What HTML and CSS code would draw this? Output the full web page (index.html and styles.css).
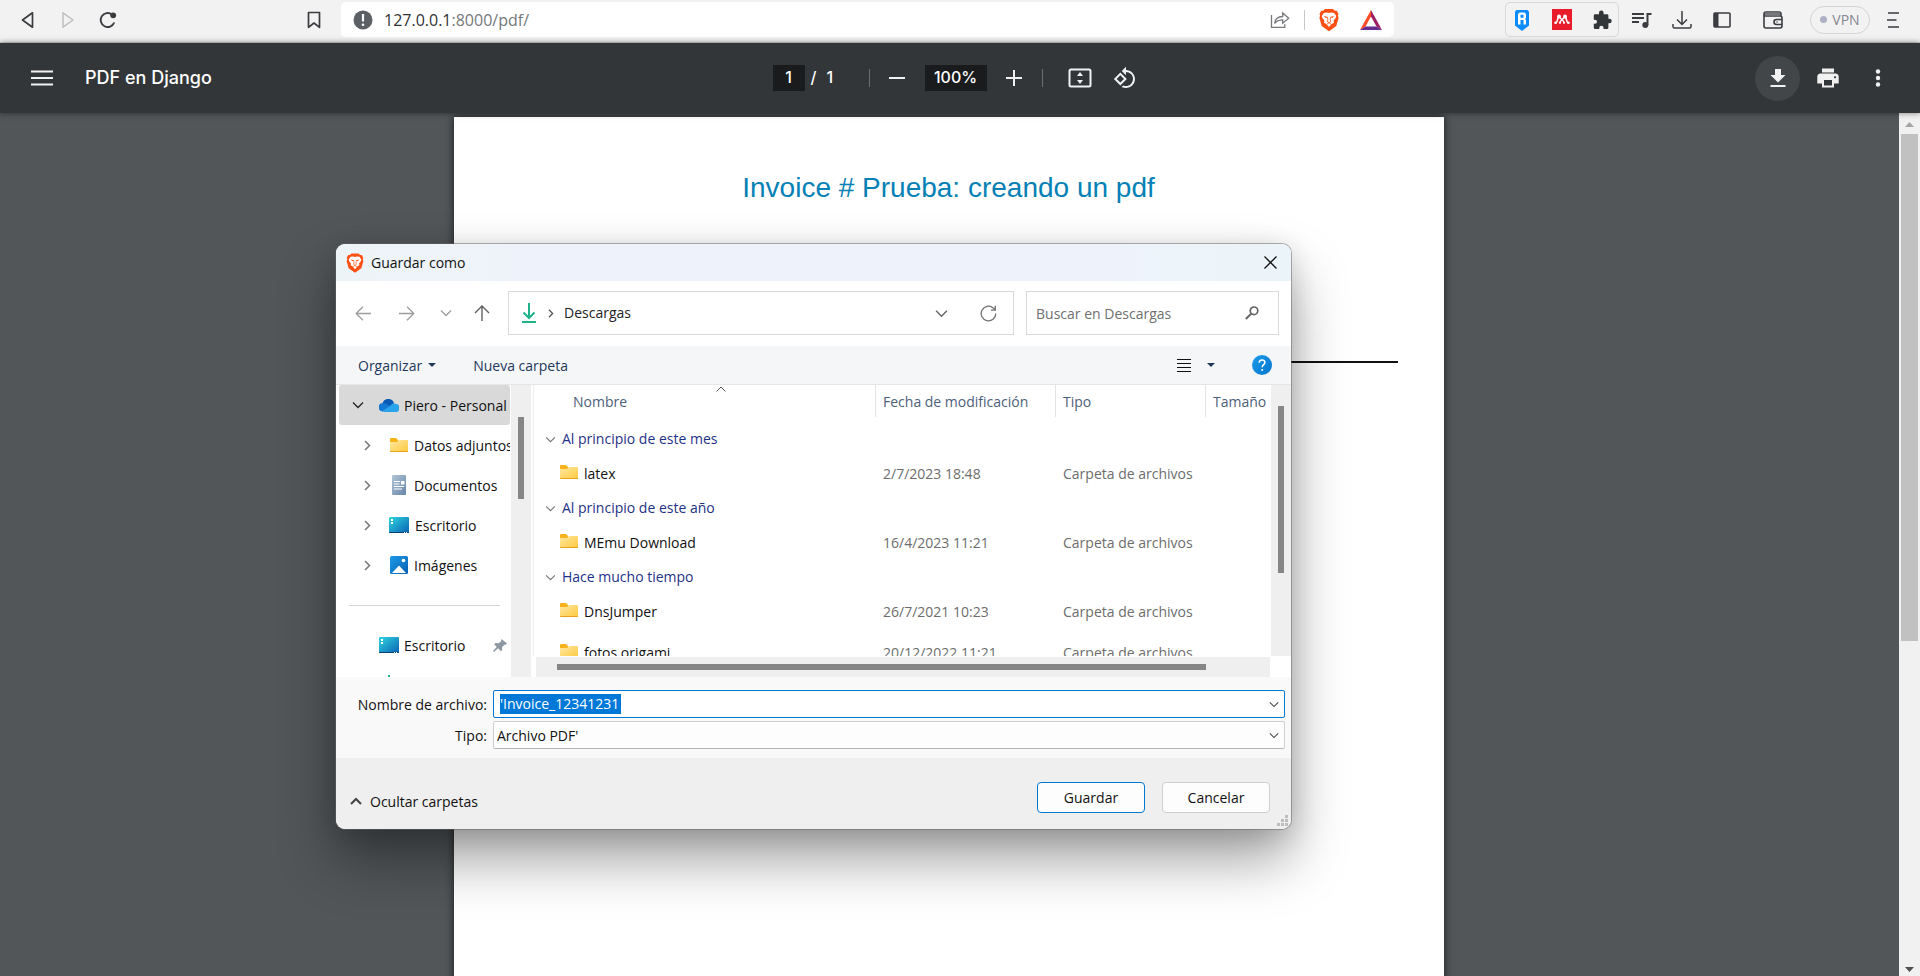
FILE: index.html
```html
<!DOCTYPE html>
<html lang="es">
<head>
<meta charset="utf-8">
<title>PDF en Django</title>
<link rel="stylesheet" href="styles.css">
</head>
<body>
<svg class="defs" aria-hidden="true">
  <defs>
    <linearGradient id="g-folder" x1="0" y1="0" x2="1" y2="1"><stop offset="0" stop-color="#ffe8a0"/><stop offset="1" stop-color="#fdc93f"/></linearGradient>
    <linearGradient id="g-desk" x1="0" y1="0" x2="1" y2="1"><stop offset="0" stop-color="#2fd6e0"/><stop offset="1" stop-color="#0a62b4"/></linearGradient>
    <linearGradient id="g-doc" x1="0" y1="0" x2="1" y2="1"><stop offset="0" stop-color="#b3c5d8"/><stop offset="1" stop-color="#6685a8"/></linearGradient>
    <linearGradient id="g-img" x1="0" y1="0" x2="1" y2="1"><stop offset="0" stop-color="#1c9be6"/><stop offset="1" stop-color="#0a60b5"/></linearGradient>
    <linearGradient id="g-help" x1="0" y1="0" x2="1" y2="1"><stop offset="0" stop-color="#1b9de8"/><stop offset="1" stop-color="#0673cf"/></linearGradient>
    <symbol id="folder" viewBox="0 0 18 14"><path d="M0 1a1 1 0 0 1 1-1h5l2 2v3H0z" fill="#f7b21c"/><path d="M0 4h7l2-2h8a1 1 0 0 1 1 1v10a1 1 0 0 1-1 1H1a1 1 0 0 1-1-1z" fill="url(#g-folder)"/><path d="M0 13h18a1 1 0 0 1-1 1H1a1 1 0 0 1-1-1z" fill="#e8a21c"/></symbol>
    <symbol id="desktop" viewBox="0 0 20 16"><rect width="20" height="16" rx="1" fill="url(#g-desk)"/><path d="M0 15h20a1 1 0 0 1-1 1H1a1 1 0 0 1-1-1z" fill="#0b3f70"/><path d="M2 2h2v2H2zM2 5h2v2H2zM15 15h1v1h-1zM17 15h1v1h-1z" fill="#fff"/></symbol>
    <symbol id="lion" viewBox="0 0 20 23"><path d="M6 .5h8l1.800 1.800 2-.1L19.500 5.500l-.6 1.700.7 2.300-2.300 8L10 22.800 2.700 17.500.4 9.500l.7-2.300L.5 5.500 2.200 2.200l2 .1z" fill="#fb4f14"/><path d="M10 4.600l2.200-.6 3 .4 2 3.200-.5 2L14.600 12l.4 2.200-2.400 1.300L10 18.600l-2.600-3.100L5 14.200l.4-2.200-2.100-2.400-.5-2 2-3.200 3-.4z" fill="#fff"/><path d="M4.800 7.400l3.700.8.2 1.100-2.100-.1zM15.200 7.400l-3.700.8-.2 1.100 2.100-.1z" fill="#fb4f14"/><path d="M8.500 9l.4 2.600-.9 1.200 2 1.400 2-1.400-.9-1.200.4-2.600M7.900 15.700L10 14.300l2.100 1.400" fill="none" stroke="#fb4f14" stroke-width=".8"/></symbol>
    <symbol id="chev-down" viewBox="0 0 12 8"><path d="M1 1.500l5 5 5-5" fill="none" stroke="currentColor" stroke-width="1.300"/></symbol>
    <symbol id="chev-right" viewBox="0 0 7 11"><path d="M1 1l4.500 4.500L1 10" fill="none" stroke="currentColor" stroke-width="1.600"/></symbol>
    <symbol id="caret" viewBox="0 0 8 4"><path d="M0 0h8L4 4z" fill="currentColor"/></symbol>
  </defs>
</svg>

<header class="browser">
  <nav class="browser-nav">
    <button class="tool" aria-label="Atrás"><svg width="16" height="18" viewBox="0 0 16 18"><path d="M12.500 1.800v14.400L2.500 9z" fill="none" stroke="#3a3c40" stroke-width="1.700" stroke-linejoin="round"/></svg></button>
    <button class="tool" aria-label="Adelante"><svg width="16" height="18" viewBox="0 0 16 18"><path d="M3 1.800v14.400L13 9z" fill="none" stroke="#bfbfc1" stroke-width="1.500" stroke-linejoin="round"/></svg></button>
    <button class="tool" aria-label="Recargar"><svg width="18" height="18" viewBox="0 0 18 18"><path d="M15.200 11.500A7 7 0 1 1 13 3.500" fill="none" stroke="#3a3c40" stroke-width="1.900"/><circle cx="14.200" cy="4.300" r="2.900" fill="#3a3c40"/></svg></button>
    <button class="tool tool-mark" aria-label="Marcador"><svg width="14" height="18" viewBox="0 0 14 18"><path d="M1.500 1.500h11v14.800L7 12l-5.500 4.300z" fill="none" stroke="#3a3c40" stroke-width="1.700" stroke-linejoin="round"/></svg></button>
  </nav>
  <div class="address">
    <svg width="20" height="20" viewBox="0 0 20 20"><circle cx="10" cy="10" r="9.500" fill="#5c5f64"/><path d="M10 4v7.500" stroke="#fff" stroke-width="2.200"/><circle cx="10" cy="14.700" r="1.300" fill="#fff"/></svg>
    <a class="url" href="#">127.0.0.1<span>:8000/pdf/</span></a>
    <svg class="push" width="20" height="18" viewBox="0 0 20 18" fill="none" stroke="#77797d" stroke-width="1.300"><path d="M1.500 4v12.300h13.300v-3M4.700 12.500c.5-4.800 3-7 8-7V2l6 5.200-6 5V8.800c-4 0-6 .8-8 3.700z"/></svg>
    <i class="rule"></i>
    <svg class="lion" width="20" height="24"><use href="#lion"/></svg>
    <svg width="22" height="20" viewBox="0 0 22 20"><path d="M11 0L0 20l5.500-3.500L11 6.500z" fill="#ff4c24"/><path d="M11 0v6.500l5.500 10L22 20z" fill="#9e1f63"/><path d="M0 20h22l-5.500-3.500h-11z" fill="#662d91"/></svg>
  </div>
  <div class="browser-tools">
    <div class="extensions">
      <svg width="20" height="22" viewBox="0 0 20 22"><path d="M4.500 1h11L17 2.500v14L10 22l-7-5.500v-14z" fill="#0a8cff"/><path d="M6 15.500V5l1.500-1.500h5L14 5v4l-1 1 1 1v4.500h-2.500V11h-3v4.500zM8.500 5.700v3h3v-3z" fill="#fff" fill-rule="evenodd"/></svg>
      <svg width="20" height="21" viewBox="0 0 20 21"><rect width="20" height="21" fill="#e91c2c"/><path d="M3.500 14c2 0 1.700-4 3-6M8 14c0-1.500.8-2.500 2-3.500 1.200 1 2 2 2 3.500M16.500 14c-2 0-1.700-4-3-6M7 8l3 2.500L13 8" fill="none" stroke="#fff" stroke-width="1.600"/><g fill="#fff"><circle cx="7" cy="7.500" r="2"/><circle cx="13" cy="7.500" r="2"/><circle cx="3.500" cy="13.800" r="1.300"/><circle cx="16.500" cy="13.800" r="1.300"/><circle cx="8" cy="13.800" r="1.100"/><circle cx="12" cy="13.800" r="1.100"/></g></svg>
      <svg width="20" height="20" viewBox="0 0 20 20"><path d="M7 4.200V2.800a2.300 2.300 0 0 1 4.600 0v1.400h3.600a1.200 1.200 0 0 1 1.200 1.200v3.300h1a2.300 2.300 0 0 1 0 4.600h-1v4.500a1.200 1.200 0 0 1-1.200 1.200h-3.700v-1.200a2.100 2.100 0 0 0-4.200 0V19H3a1.200 1.200 0 0 1-1.200-1.200v-4.100H3a2 2 0 0 0 0-4H1.800V5.400A1.200 1.200 0 0 1 3 4.200z" fill="#333639"/></svg>
    </div>
    <button class="tool" aria-label="Lista de medios"><svg width="20" height="18" viewBox="0 0 20 18"><path d="M0 3h12M0 7h12M0 11h7" stroke="#3a3c40" stroke-width="1.900"/><path d="M15.500 14V3h4" fill="none" stroke="#3a3c40" stroke-width="2"/><circle cx="13.300" cy="14" r="3" fill="#3a3c40"/></svg></button>
    <button class="tool" aria-label="Descargas"><svg width="20" height="18" viewBox="0 0 20 18" fill="none" stroke="#3a3c40" stroke-width="1.500"><path d="M10 0v13M5 8.500l5 5 5-5M1 13v2.500a1.500 1.500 0 0 0 1.500 1.500h15a1.500 1.500 0 0 0 1.500-1.500V13"/></svg></button>
    <button class="tool" aria-label="Barra lateral"><svg width="18" height="16" viewBox="0 0 18 16"><rect x="1" y="1" width="16" height="14" rx="1" fill="none" stroke="#3a3c40" stroke-width="1.600"/><path d="M1 1h4.500v14H1z" fill="#3a3c40"/></svg></button>
    <button class="tool tool-wallet" aria-label="Cartera"><svg width="20" height="18" viewBox="0 0 20 18" fill="none" stroke="#3a3c40" stroke-width="1.600"><path d="M1 3v12a2 2 0 0 0 2 2h14a2 2 0 0 0 2-2V7a2 2 0 0 0-2-2H3a2 2 0 0 1 0-4h13a2 2 0 0 1 2 2v2"/><path d="M2 3h15" stroke-width="3" stroke="#77797c"/><path d="M19 8.500h-5.500a2.500 2.500 0 0 0 0 5H19"/><path d="M13.500 11h1"/></svg></button>
    <button class="vpn"><i></i>VPN</button>
    <button class="tool tool-menu" aria-label="Menú"><svg width="12" height="16" viewBox="0 0 12 16"><path d="M1 1h11M0 8h9.500M1 15h11" stroke="#3a3c40" stroke-width="1.700"/></svg></button>
  </div>
</header>

<div class="pdfbar">
  <div class="pdf-left">
    <button class="tool" aria-label="Menú"><svg width="22" height="16" viewBox="0 0 22 16"><path d="M0 1.500h22M0 8h22M0 14.500h22" stroke="#f1f1f1" stroke-width="2.200"/></svg></button>
    <h1 class="pdf-title">PDF en Django</h1>
  </div>
  <div class="pdf-center">
    <div class="pager"><input class="field page-field" aria-label="Página" value="1"><span>/</span><span class="total">1</span></div>
    <i class="bar-rule"></i>
    <button class="zoomer" aria-label="Alejar"><svg width="16" height="16" viewBox="0 0 16 16"><path d="M0 8h16" stroke="#f1f1f1" stroke-width="2"/></svg></button>
    <input class="field zoom-field" aria-label="Zoom" value="100%">
    <button class="zoomer" aria-label="Acercar"><svg width="16" height="16" viewBox="0 0 16 16"><path d="M0 8h16M8 0v16" stroke="#f1f1f1" stroke-width="2"/></svg></button>
    <i class="bar-rule"></i>
    <button class="round fit" aria-label="Ajustar"><svg width="24" height="20" viewBox="0 0 24 20"><rect x="1.500" y="1.500" width="21" height="17" rx="1.500" fill="none" stroke="#f1f1f1" stroke-width="2"/><path d="M12 4l3 4H9zM12 16l3-4H9z" fill="#f1f1f1"/></svg></button>
    <button class="round" aria-label="Girar"><svg width="24" height="24" viewBox="0 0 24 24"><path d="M7.340 6.410L.86 12.900l6.490 6.480 6.490-6.480-6.500-6.490zM3.690 12.900l3.660-3.660L11 12.900l-3.660 3.660-3.650-3.660zm15.670-6.260C17.610 4.880 15.300 4 13 4V.76L8.760 5 13 9.240V6c1.790 0 3.580.68 4.950 2.050 2.730 2.730 2.730 7.170 0 9.900C16.580 19.320 14.790 20 13 20c-.97 0-1.940-.21-2.840-.61l-1.490 1.490C10.020 21.620 11.510 22 13 22c2.300 0 4.610-.88 6.360-2.640 3.520-3.510 3.520-9.210 0-12.720z" fill="#f1f1f1"/></svg></button>
  </div>
  <div class="pdf-right">
    <button class="round active" aria-label="Descargar"><svg width="16" height="20" viewBox="0 0 16 20"><path d="M5 1h6v6h4.500L8 14.500.5 7H5zM.5 17h15v2H.5z" fill="#f1f1f1"/></svg></button>
    <button class="round" aria-label="Imprimir"><svg width="22" height="20" viewBox="0 0 22 20"><path d="M5 .5h12v4H5zM3.500 5.500h15A3.200 3.200 0 0 1 21.700 9v6.500H17v4H5v-4H.3V9a3.200 3.200 0 0 1 3.200-3.500zM7 12v5.500h8V12zM18 8.200a1 1 0 1 0 .1 0z" fill="#f1f1f1" fill-rule="evenodd"/></svg></button>
    <button class="round" aria-label="Más"><svg width="6" height="18" viewBox="0 0 6 18" fill="#f1f1f1"><circle cx="3" cy="2.500" r="2.200"/><circle cx="3" cy="9" r="2.200"/><circle cx="3" cy="15.500" r="2.200"/></svg></button>
  </div>
</div>

<div class="viewer">
  <main class="stage">
    <article class="page">
      <h2 class="invoice">Invoice # Prueba: creando un pdf</h2>
      <hr class="line">
    </article>
  </main>
  <div class="scroll" aria-hidden="true">
    <svg width="9" height="5" viewBox="0 0 9 5"><path d="M4.500 0L9 5H0z" fill="#a3a3a3"/></svg>
    <div class="thumb"></div>
    <svg class="scroll-end" width="9" height="5" viewBox="0 0 9 5"><path d="M4.500 5L9 0H0z" fill="#505050"/></svg>
  </div>
</div>

<section class="dialog" role="dialog" aria-labelledby="dlg-title">
  <header class="dlg-head">
    <svg width="18" height="20"><use href="#lion"/></svg>
    <h2 class="dlg-title" id="dlg-title">Guardar como</h2>
    <button class="plain" aria-label="Cerrar"><svg width="13" height="13" viewBox="0 0 13 13"><path d="M.5.5l12 12M12.500.5l-12 12" stroke="#111" stroke-width="1.300"/></svg></button>
  </header>

  <div class="dlg-nav">
    <button class="plain" aria-label="Atrás"><svg width="16" height="15" viewBox="0 0 16 15"><path d="M16 7.500H1M8 .8L1.200 7.500 8 14.200" fill="none" stroke="#9d9d9d" stroke-width="1.300"/></svg></button>
    <button class="plain" aria-label="Adelante"><svg width="16" height="15" viewBox="0 0 16 15"><path d="M0 7.500h15M8 .8l6.800 6.700L8 14.200" fill="none" stroke="#9d9d9d" stroke-width="1.300"/></svg></button>
    <button class="plain faint" aria-label="Recientes"><svg width="12" height="8"><use href="#chev-down"/></svg></button>
    <button class="plain" aria-label="Subir"><svg width="16" height="16" viewBox="0 0 16 16"><path d="M8 16V1M1 8l7-7 7 7" fill="none" stroke="#606060" stroke-width="1.400"/></svg></button>
    <div class="path">
      <svg width="14" height="20" viewBox="0 0 14 20"><path d="M7 0v15M1.500 9.500L7 15l5.500-5.500M0 19h14" fill="none" stroke="#1fb38c" stroke-width="2"/></svg>
      <svg class="crumb" width="6" height="9"><use href="#chev-right"/></svg>
      <span>Descargas</span>
      <button class="plain push" aria-label="Desplegar"><svg width="13" height="9"><use href="#chev-down"/></svg></button>
      <button class="plain" aria-label="Actualizar"><svg width="17" height="17" viewBox="0 0 17 17"><path d="M15.800 8.500a7.300 7.300 0 1 1-2.600-5.600l1.800 1.900M15.300.8v4.400h-4.400" fill="none" stroke="#707070" stroke-width="1.300"/></svg></button>
    </div>
    <div class="search">
      <input type="text" aria-label="Buscar" placeholder="Buscar en Descargas">
      <svg width="14" height="14" viewBox="0 0 14 14"><circle cx="9" cy="4.800" r="3.800" fill="none" stroke="#636363" stroke-width="1.700"/><path d="M6.300 7.600L.8 13" stroke="#636363" stroke-width="2"/></svg>
    </div>
  </div>

  <div class="dlg-cmd">
    <button class="cmd">Organizar<svg width="8" height="4"><use href="#caret"/></svg></button>
    <button class="cmd">Nueva carpeta</button>
    <button class="cmd push" aria-label="Vista"><svg width="14" height="13" viewBox="0 0 14 13"><path d="M0 .5h14M0 4.500h14M0 8.500h14M0 12.500h14" stroke="#111"/></svg><svg class="view-caret" width="8" height="4"><use href="#caret"/></svg></button>
    <button class="cmd help" aria-label="Ayuda"><svg width="20" height="20" viewBox="0 0 20 20"><circle cx="10" cy="10" r="10" fill="url(#g-help)"/><path d="M7.200 7.800c0-3.800 5.800-3.700 5.700-.3 0 2.200-2.700 2.200-2.700 4.700" fill="none" stroke="#fff" stroke-width="1.500"/><circle cx="10.200" cy="15" r="1" fill="#fff"/></svg></button>
  </div>

  <div class="dlg-body">
    <nav class="tree">
      <a class="node root" href="#"><svg width="12" height="8"><use href="#chev-down"/></svg><svg class="ico" width="20" height="13" viewBox="0 0 20 13"><path d="M3 11A4 4 0 0 1 3.500 4.500 6 6 0 0 1 15 4l-4 5z" fill="#0a5bb5"/><path d="M4.500 12.500A4.300 4.300 0 1 1 6 4.500l8 4z" fill="#1479d4"/><path d="M5 13h11a4 4 0 0 0 1-8c-3-1-4.500 0-6 2l-7 4.500z" fill="#28a5ea"/></svg>Piero - Personal</a>
      <a class="node" href="#"><svg width="7" height="11"><use href="#chev-right"/></svg><svg class="ico" width="18" height="14"><use href="#folder"/></svg>Datos adjuntos</a>
      <a class="node" href="#"><svg width="7" height="11"><use href="#chev-right"/></svg><svg class="ico" width="18" height="20" viewBox="0 0 18 20"><rect x="2" width="14" height="20" rx="1" fill="url(#g-doc)"/><path d="M4 6.500h6M4 9h5.500M4 11.500h10M4 14h8" stroke="#fff" stroke-width="1.200"/><path d="M11 6h3.500v3.500H11z" fill="#fff"/></svg>Documentos</a>
      <a class="node" href="#"><svg width="7" height="11"><use href="#chev-right"/></svg><svg class="ico" width="20" height="16"><use href="#desktop"/></svg>Escritorio</a>
      <a class="node" href="#"><svg width="7" height="11"><use href="#chev-right"/></svg><svg class="ico" width="18" height="18" viewBox="0 0 18 18"><rect width="18" height="18" rx="1.500" fill="url(#g-img)"/><path d="M2 17l7-7.500L16 17z" fill="#fff"/><circle cx="13.500" cy="4.500" r="1.800" fill="#fff"/></svg>Imágenes</a>
      <hr class="tree-rule">
      <a class="node pinned" href="#"><svg class="ico" width="20" height="16"><use href="#desktop"/></svg>Escritorio<svg class="push" width="14" height="13" viewBox="0 0 14 13"><path d="M8.500 0L14 4.500l-1.500 1.200-1 .1-2.500 2.400.2 3-1.200 1.100L5 9.200 1 13l-1-.9L3.700 8 1.200 5.200 2.500 4l3 .2L8 2.500z" fill="#8e98a3"/></svg></a>
      <a class="node pinned" href="#" aria-label="Descargas"><svg class="ico" width="20" height="20" viewBox="0 0 20 20"><path d="M10 0v15M4.500 9.500L10 15l5.500-5.500M3 19h14" fill="none" stroke="#1fb38c" stroke-width="2"/></svg></a>
    </nav>
    <div class="track tree-track"><div></div></div>
    <div class="files">
      <table class="table">
        <thead>
          <tr><th class="c-name"><span>Nombre<svg class="sort" width="10" height="6" viewBox="0 0 10 6"><path d="M.5 5.500L5 1l4.500 4.500" fill="none" stroke="#555"/></svg></span></th><th class="c-date"><span>Fecha de modificación</span></th><th class="c-type"><span>Tipo</span></th><th><span>Tamaño</span></th></tr>
        </thead>
        <tbody>
          <tr class="group"><th colspan="4"><svg width="11" height="7"><use href="#chev-down"/></svg>Al principio de este mes</th></tr>
          <tr><td><svg width="18" height="14"><use href="#folder"/></svg>latex</td><td>2/7/2023 18:48</td><td>Carpeta de archivos</td><td></td></tr>
          <tr class="group"><th colspan="4"><svg width="11" height="7"><use href="#chev-down"/></svg>Al principio de este año</th></tr>
          <tr><td><svg width="18" height="14"><use href="#folder"/></svg>MEmu Download</td><td>16/4/2023 11:21</td><td>Carpeta de archivos</td><td></td></tr>
          <tr class="group"><th colspan="4"><svg width="11" height="7"><use href="#chev-down"/></svg>Hace mucho tiempo</th></tr>
          <tr><td><svg width="18" height="14"><use href="#folder"/></svg>DnsJumper</td><td>26/7/2021 10:23</td><td>Carpeta de archivos</td><td></td></tr>
          <tr><td><svg width="18" height="14"><use href="#folder"/></svg>fotos origami</td><td>20/12/2022 11:21</td><td>Carpeta de archivos</td><td></td></tr>
        </tbody>
      </table>
    </div>
    <div class="track files-track"><div></div></div>
    <div class="hscroll"><div></div></div>
  </div>

  <form class="dlg-form">
    <label for="fname">Nombre de archivo:</label>
    <div class="combo focus"><input id="fname" type="text" value="'Invoice_12341231"><svg width="10" height="7"><use href="#chev-down"/></svg></div>
    <label for="ftype">Tipo:</label>
    <div class="combo"><select id="ftype"><option>Archivo PDF'</option></select><svg width="10" height="7"><use href="#chev-down"/></svg></div>
  </form>

  <footer class="dlg-foot">
    <button class="hide"><svg width="12" height="8" viewBox="0 0 12 8"><path d="M1 7l5-5 5 5" fill="none" stroke="#444" stroke-width="2"/></svg>Ocultar carpetas</button>
    <button class="btn primary">Guardar</button>
    <button class="btn">Cancelar</button>
    <svg class="grip" width="11" height="11" viewBox="0 0 11 11" fill="#bdbdbd"><path d="M8 0h3v3H8zM4 4h3v3H4zM8 4h3v3H8zM0 8h3v3H0zM4 8h3v3H4zM8 8h3v3H8z"/></svg>
  </footer>
</section>
</body>
</html>
```
FILE: styles.css
```css
* { box-sizing: border-box; }
body {
  margin: 0;
  height: 100vh;
  display: flex;
  flex-direction: column;
  overflow: hidden;
  font-family: "Open Sans", "Noto Sans", sans-serif;
  font-size: 14px;
  color: #111;
}
button, input, select { font: inherit; color: inherit; margin: 0; padding: 0; border: 0; background: none; outline: 0; }
button { display: flex; align-items: center; justify-content: center; cursor: pointer; }
a { color: inherit; text-decoration: none; }
h1, h2 { margin: 0; font-weight: 400; }
svg { flex: none; display: block; }
.defs { position: absolute; width: 0; height: 0; }
.push { margin-left: auto; }

/* Browser bar */
.browser {
  display: flex;
  flex: none;
  height: 43px;
  padding: 2px 16px 5px 8px;
  background: #f2f2f2;
  border-bottom: 1px solid #d3d8d7;
}
.browser-nav, .browser-tools { display: flex; align-items: center; }
.tool { width: 40px; height: 34px; }
.tool-mark { margin: 0 7px 0 166px; }
.address {
  flex: 1;
  display: flex;
  align-items: center;
  padding: 0 12px;
  background: #fff;
  border-radius: 5px;
}
.url { margin-left: 11px; font-size: 16px; color: #303236; }
.url span { color: #75777b; }
.rule { width: 1px; height: 20px; margin: 0 14px; background: #c9c9c9; }
.lion { margin-right: 21px; }
.extensions {
  display: flex;
  align-items: center;
  gap: 20px;
  height: 35px;
  margin: 0 3px 0 111px;
  padding: 0 6px;
  border: 1px solid #d7d8db;
  border-radius: 5px;
}
.tool-wallet { margin: 0 17px 0 11px; }
.vpn { width: 60px; height: 28px; gap: 5px; border: 1px solid #d5d5d8; border-radius: 14px; color: #84878f; }
.vpn i { width: 7px; height: 7px; border-radius: 50%; background: #aeb0c4; }
.tool-menu { width: 22px; margin-left: 12px; }

/* PDF toolbar */
.pdfbar {
  position: relative;
  display: grid;
  grid-template-columns: 1fr auto 1fr;
  align-items: center;
  flex: none;
  height: 70px;
  padding: 0 20px;
  background: #323639;
  color: #fff;
  box-shadow: 0 0 6px rgba(0, 0, 0, .5);
  font-family: Inter, "Open Sans", sans-serif;
  font-size: 16px;
  font-weight: 500;
}
.pdf-left, .pdf-center, .pdf-right { display: flex; align-items: center; }
.pdf-left { padding-left: 2px; gap: 23px; }
.pdf-title { padding-bottom: 2px; font-size: 18px; font-weight: 500; }
.pdf-right { justify-content: flex-end; gap: 5px; }
.field { height: 26px; padding-bottom: 2px; background: #191b1c; text-align: center; }
.pager { display: flex; align-items: center; width: 96px; }
.pager span { margin-left: 6px; padding-bottom: 2px; }
.pager .total { margin-left: 10px; }
.page-field { width: 32px; }
.zoom-field { width: 62px; }
.zoomer { width: 55px; height: 40px; }
.bar-rule { width: 1px; height: 18px; background: #6b6e70; }
.round { width: 45px; height: 45px; border-radius: 50%; }
.fit { margin-left: 15px; }
.active { background: #424649; }

/* Document area */
.viewer { display: flex; flex: 1; min-height: 0; background: #525659; }
.stage { flex: 1; overflow: hidden; padding: 4px 2px 0 0; }
.page { width: 990px; height: 1280px; margin: 0 auto; padding: 55px 46px; background: #fff; box-shadow: 0 0 8px rgba(0, 0, 0, .7); }
.invoice { text-align: center; font: 28px/32px "Liberation Sans", Arial, sans-serif; color: #0581b6; }
.line { margin: 157px 0 0; border: 0; border-top: 2px solid #111; }
.scroll { display: flex; flex-direction: column; align-items: center; width: 21px; padding: 9px 0 4px; background: #f1f1f1; }
.thumb { width: 17px; height: 507px; max-height: 60%; margin-top: 7px; background: #c1c1c1; }
.scroll-end { margin-top: auto; }

/* Save dialog floating over the viewer */
.dialog {
  position: absolute;
  left: 336px;
  top: 244px;
  width: 955px;
  max-width: calc(100vw - 336px);
  overflow: hidden;
  border-radius: 9px;
  background: #fff;
  box-shadow: 0 0 0 1px rgba(100, 100, 100, .5), 0 30px 55px rgba(0, 0, 0, .38), 0 4px 26px rgba(0, 0, 0, .14);
}
.plain { min-width: 13px; }
.dlg-head {
  display: flex;
  align-items: center;
  gap: 7px;
  height: 37px;
  padding: 0 14px 0 10px;
  background: linear-gradient(90deg, #edf4f7, #eef3fb 20%, #eef3fb 80%, #ebf4f8);
}
.dlg-title { font-size: 14px; flex: 1; }
.dlg-nav {
  display: grid;
  grid-template-columns: 44px 44px 33px 46px 1fr 253px;
  height: 65px;
  padding: 10px 12px 11px 5px;
}
.dlg-nav > .plain:nth-child(4) { padding-right: 7px; }
.path, .search { display: flex; align-items: center; border: 1px solid #d9d9d9; }
.path { margin-right: 12px; padding: 0 16px 0 13px; color: #222; }
.path span { padding-bottom: 2px; }
.path .crumb { margin: 0 10px 0 12px; color: #555; }
.path .plain { margin-right: 32px; color: #666; }
.path .plain:last-child { margin-right: 0; }
.search { padding: 0 19px 0 9px; }
.search input { flex: 1; min-width: 0; }
.search input::placeholder { color: #6f6f6f; opacity: 1; }
.faint { color: #9d9d9d; }
.dlg-cmd {
  display: flex;
  align-items: center;
  height: 39px;
  padding: 0 19px 0 22px;
  background: #f4f6f8;
  border-bottom: 1px solid #e4e6e8;
  color: #1e395b;
}
.cmd { gap: 6px; margin-right: 37px; }
.cmd.push { margin-left: auto; }
.cmd.help { margin-right: 0; }
.view-caret { margin-left: 10px; }

.dlg-body {
  display: grid;
  grid-template-columns: 175px 20px 1fr 20px;
  grid-template-rows: 271px 21px;
}
.tree { grid-row: 1 / 3; overflow: hidden; height: 292px; padding: 0 1px 0 3px; }
.node {
  display: flex;
  align-items: center;
  height: 40px;
  padding-left: 25px;
  white-space: nowrap;
  overflow: hidden;
  color: #111;
}
.node > svg:first-child { color: #7c7c7c; }
.node .ico { margin: 0 6px 0 19px; }
.node .ico[width="20"] { margin: 0 6px 0 18px; }
.node.root { padding-left: 13px; background: #d9d9d9; border-radius: 3px; }
.node.root > svg:first-child { color: #222; }
.node.root .ico { margin: 0 5px 0 15px; }
.node.pinned { padding: 0 3px 0 40px; }
.node.pinned .ico { margin: 0 5px 0 0; }
.tree-rule { margin: 20px 10px 19px; border: 0; border-top: 1px solid #d5d5d5; }
.track { background: #efefef; }
.track div { width: 6px; margin: 0 auto; background: #868686; }
.tree-track { grid-row: 1 / 3; }
.tree-track div { height: 82px; margin-top: 32px; }
.files-track div { height: 167px; margin-top: 21px; }
.files { overflow: hidden; height: 271px; margin-left: 2px; border-left: 1px solid #eee; }
.hscroll { grid-column: 3; margin: 1px 1px 0 5px; padding: 7px 64px 7px 21px; background: #efefef; }
.hscroll div { height: 6px; background: #868686; }

.table { width: 100%; table-layout: fixed; border-collapse: collapse; white-space: nowrap; }
.table th, .table td { padding: 0; text-align: left; font-weight: 400; }
.c-name { width: 341px; }
.c-date { width: 180px; }
.c-type { width: 150px; }
.table thead th { padding-bottom: 8px; color: #4c607a; }
.table thead span { display: flex; align-items: center; height: 32px; padding-left: 7px; border-left: 1px solid #e3e3e3; }
.table thead .c-name span { position: relative; padding-left: 39px; border-left: 0; }
.sort { position: absolute; left: 182px; top: 1px; }
.table .group th { height: 28px; padding: 0 0 2px 11px; color: #1e3287; }
.table td { height: 41px; padding-left: 8px; color: #6d6d6d; }
.table td:first-child { padding-left: 26px; color: #111; }
.table tbody svg { display: inline-block; margin-right: 6px; }
.group svg { color: #777; vertical-align: middle; }

.dlg-form {
  display: grid;
  grid-template-columns: 151px 1fr;
  gap: 3px 6px;
  align-items: center;
  padding: 13px 6px 9px 0;
  background: #f9f9f9;
}
.dlg-form label { text-align: right; }
.combo { display: flex; align-items: center; height: 28px; padding: 0 5px 0 3px; border: 1px solid #cfcfcf; border-bottom-color: #b5b5b5; border-radius: 2px; background: #fdfdfd; }
.combo.focus { justify-content: space-between; padding-left: 6px; border-color: #0078d4; background: #fff; }
.combo input { width: 121px; height: 20px; padding-bottom: 2px; background: #0078d7; color: #fff; }
.combo select { flex: 1; appearance: none; }
.combo svg { color: #444; }

.dlg-foot {
  position: relative;
  display: flex;
  align-items: flex-end;
  gap: 17px;
  padding: 24px 21px 16px 14px;
  background: #efefef;
}
.hide { gap: 8px; height: 24px; margin-right: auto; }
.btn { width: 108px; height: 31px; border: 1px solid #cfcfcf; border-radius: 4px; background: #fdfdfd; }
.btn.primary { border-color: #0078d4; }
.grip { position: absolute; right: 3px; bottom: 3px; }
```
